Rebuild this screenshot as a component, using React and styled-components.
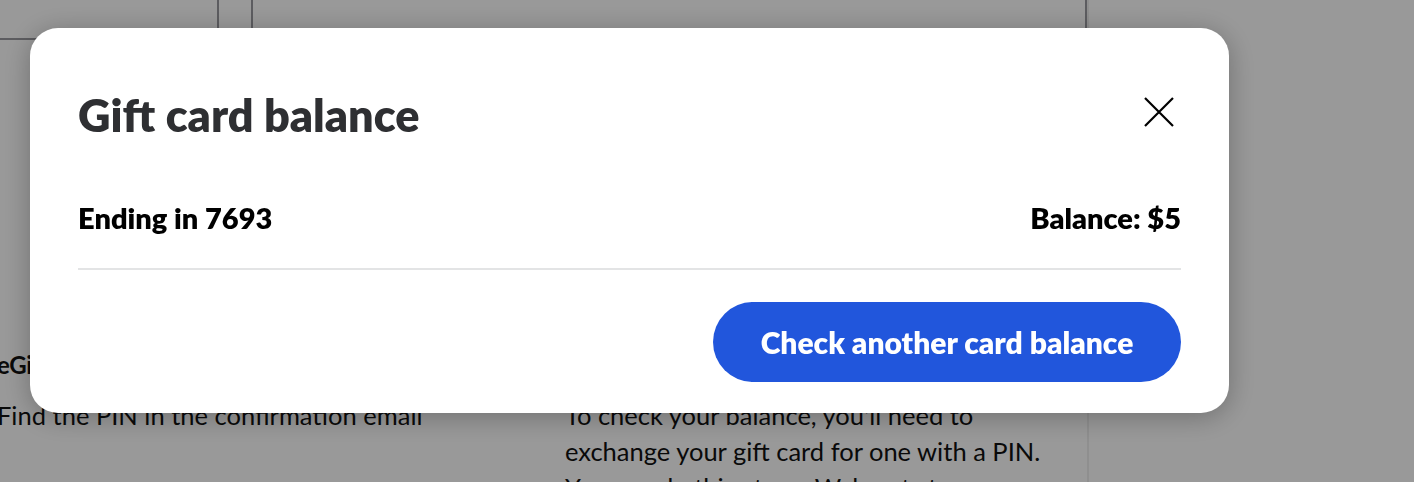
import React from "react";
import styled, { createGlobalStyle } from "styled-components";

const Global = createGlobalStyle`
  html, body { margin: 0; padding: 0; background: #fff; }
  body { font-family: Lato, "Liberation Sans", sans-serif; overflow: hidden; }
  * { box-sizing: border-box; }
`;

const Page = styled.div`
  display: flex;
  width: 1414px;
  height: 482px;
  overflow: hidden;
`;

const Main = styled.div`
  width: 1089px;
  flex: none;
  border-right: 2px solid #eeeeee;
  display: flex;
  flex-direction: column;
`;

const TopRow = styled.div`
  display: flex;
  flex: none;
  height: 40px;
`;

const TopCell = styled.div`
  width: ${(p) => p.$w || "auto"};
  flex: ${(p) => (p.$grow ? 1 : "none")};
  border-right: 2px solid #9a9aa0;
  border-bottom: ${(p) => (p.$bottom ? "2px solid #9a9aa0" : "none")};
`;

const Columns = styled.div`
  display: flex;
  flex: none;
  padding-top: 307px;
  margin-left: -3px;
`;

const Col = styled.div`
  width: ${(p) => p.$w};
  flex: none;
  font-size: 25.5px;
  line-height: 36px;
  color: #111;
`;

const Line = styled.div`
  white-space: nowrap;
`;

const ColTitle = styled.div`
  font-weight: 700;
  font-size: 24px;
  line-height: 35px;
  margin-bottom: 15px;
  white-space: nowrap;
  letter-spacing: -0.5px;
`;

const Overlay = styled.div`
  position: fixed;
  inset: 0;
  background: rgba(0, 0, 0, 0.4);
  padding: 28px 0 0 30px;
`;

const Modal = styled.div`
  width: 1199px;
  height: 385px;
  background: #fff;
  border-radius: 28px;
  box-shadow: 0 4px 28px rgba(0, 0, 0, 0.28);
  padding: 60px 48px 0;
  display: flex;
  flex-direction: column;
`;

const Header = styled.div`
  display: flex;
  align-items: center;
  justify-content: space-between;
  height: 54px;
`;

const Title = styled.h2`
  margin: 0;
  font-size: 45px;
  line-height: 54px;
  font-weight: 800;
  color: #2e2f32;
`;

const CloseBtn = styled.button`
  border: 0;
  background: none;
  padding: 0;
  width: 44px;
  height: 44px;
  margin-top: -6px;
  display: flex;
  align-items: center;
  justify-content: center;
  cursor: pointer;
`;

const Row = styled.div`
  display: flex;
  justify-content: space-between;
  align-items: center;
  font-size: 29px;
  line-height: 36px;
  font-weight: 800;
  color: #000;
  margin-top: 58px;
  padding-bottom: 32px;
  border-bottom: 2px solid #e3e4e5;
`;

const Footer = styled.div`
  display: flex;
  justify-content: flex-end;
  padding-top: 32px;
`;

const Primary = styled.button`
  width: 468px;
  height: 80px;
  border-radius: 40px;
  border: 0;
  background: #2156dc;
  color: #fff;
  font-family: Lato, "Liberation Sans", sans-serif;
  font-size: 30px;
  font-weight: 800;
  cursor: pointer;
`;

export default function App() {
  return (
    <>
      <Global />
      <Page>
        <Main>
          <TopRow>
            <TopCell $w="219px" $bottom />
            <TopCell $w="34px" />
            <TopCell $grow />
          </TopRow>
          <Columns>
            <Col $w="568px">
              <ColTitle>eGift card</ColTitle>
              <Line>Find the PIN in the confirmation email</Line>
            </Col>
            <Col $w="500px">
              <ColTitle>Physical gift card</ColTitle>
              <Line>To check your balance, you'll need to</Line>
              <Line>exchange your gift card for one with a PIN.</Line>
              <Line>You can do this at any Walmart store.</Line>
            </Col>
          </Columns>
        </Main>
      </Page>
      <Overlay>
        <Modal role="dialog" aria-label="Gift card balance">
          <Header>
            <Title>Gift card balance</Title>
            <CloseBtn aria-label="Close">
              <svg width="30" height="30" viewBox="0 0 30 30">
                <path d="M1 1 L29 29 M29 1 L1 29" stroke="#000" strokeWidth="2.2" />
              </svg>
            </CloseBtn>
          </Header>
          <Row>
            <span>Ending in 7693</span>
            <span>Balance: $5</span>
          </Row>
          <Footer>
            <Primary>Check another card balance</Primary>
          </Footer>
        </Modal>
      </Overlay>
    </>
  );
}
